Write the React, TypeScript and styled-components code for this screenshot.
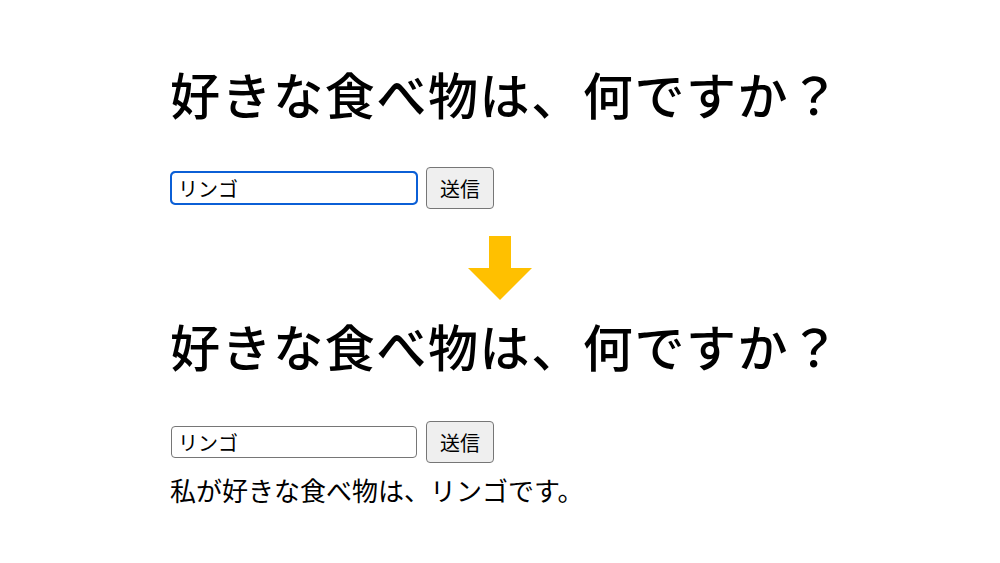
import { useEffect, useRef } from "react";
import styled, { createGlobalStyle } from "styled-components";

const GlobalStyle = createGlobalStyle`
  html, body {
    margin: 0;
    padding: 0;
    background: #ffffff;
  }
  body {
    font-family: "Noto Sans CJK JP", "Noto Sans", sans-serif;
    color: #000000;
  }
`;

const Page = styled.div`
  width: 1000px;
  height: 563px;
  box-sizing: border-box;
  padding: 63px 0 0 170px;
  display: flex;
  flex-direction: column;
  overflow: hidden;
`;

const Heading = styled.h1<{ $top?: number }>`
  margin: ${(p) => p.$top ?? 0}px 0 0;
  font-size: 50px;
  line-height: 60px;
  font-weight: 500;
  letter-spacing: 1.6px;
`;

const FormRow = styled.div<{ $top: number }>`
  margin-top: ${(p) => p.$top}px;
  display: flex;
  align-items: center;
  gap: 9px;
  height: 42px;
  padding-left: 1px;
`;

const TextInput = styled.input<{ $focused?: boolean }>`
  width: 246px;
  height: 32px;
  box-sizing: border-box;
  margin: 0;
  padding: 0 6px;
  font-family: "Noto Sans CJK JP", sans-serif;
  font-size: 20px;
  color: #000;
  background: #fff;
  border: 1px solid ${(p) => (p.$focused ? "#0b5fd6" : "#767676")};
  border-radius: 4px;
  outline: ${(p) => (p.$focused ? "2px solid #0b5fd6" : "none")};
  outline-offset: -1px;
  &:focus {
    outline: 2px solid #0b5fd6;
  }
`;

const SubmitButton = styled.button`
  height: 42px;
  width: 68px;
  box-sizing: border-box;
  margin: 0;
  padding: 0;
  font-family: "Noto Sans CJK JP", sans-serif;
  font-size: 20px;
  color: #000;
  background: #efefef;
  border: 1px solid #767676;
  border-radius: 4px;
`;

const ArrowBox = styled.div`
  margin: 27px 0 0 -170px;
  display: flex;
  justify-content: center;
  height: 64px;
`;

const Result = styled.p`
  margin: 12px 0 0;
  font-size: 26px;
  line-height: 30px;
  font-weight: 400;
`;

function DownArrow() {
  return (
    <svg width="64" height="64" viewBox="0 0 64 64">
      <path d="M21 0 H43 V32 H64 L32 64 L0 32 H21 Z" fill="#ffc000" />
    </svg>
  );
}

export default function App() {
  const inputRef = useRef<HTMLInputElement>(null);

  useEffect(() => {
    const el = inputRef.current;
    if (el) {
      el.focus();
      el.setSelectionRange(el.value.length, el.value.length);
    }
  }, []);

  return (
    <>
      <GlobalStyle />
      <Page>
        <Heading>好きな食べ物は、何ですか？</Heading>
        <FormRow $top={44}>
          <TextInput ref={inputRef} defaultValue="リンゴ" $focused />
          <SubmitButton>送信</SubmitButton>
        </FormRow>
        <ArrowBox>
          <DownArrow />
        </ArrowBox>
        <Heading $top={15}>好きな食べ物は、何ですか？</Heading>
        <FormRow $top={46}>
          <TextInput defaultValue="リンゴ" />
          <SubmitButton>送信</SubmitButton>
        </FormRow>
        <Result>私が好きな食べ物は、リンゴです。</Result>
      </Page>
    </>
  );
}
